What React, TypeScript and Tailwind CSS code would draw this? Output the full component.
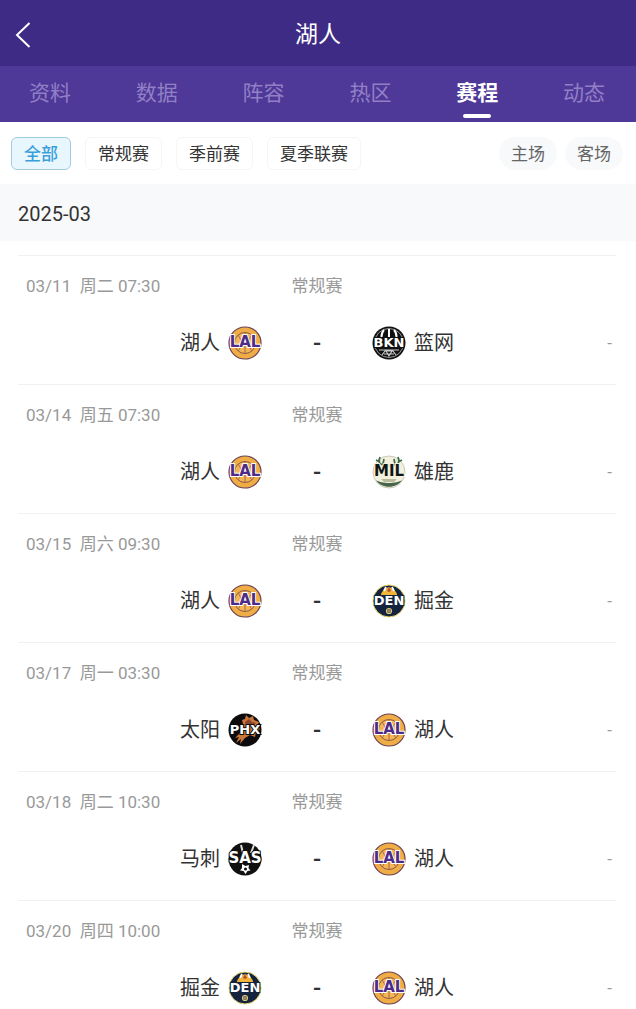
import React, { useState } from 'react';

type TeamCode = 'LAL' | 'BKN' | 'MIL' | 'DEN' | 'PHX' | 'SAS';

const tabs = ['资料', '数据', '阵容', '热区', '赛程', '动态'];
const stages = ['全部', '常规赛', '季前赛', '夏季联赛'];
const venues = ['主场', '客场'];

const teamNames: Record<TeamCode, string> = {
  LAL: '湖人',
  BKN: '篮网',
  MIL: '雄鹿',
  DEN: '掘金',
  PHX: '太阳',
  SAS: '马刺',
};

const games: { date: string; day: string; time: string; home: TeamCode; away: TeamCode }[] = [
  { date: '03/11', day: '周二', time: '07:30', home: 'LAL', away: 'BKN' },
  { date: '03/14', day: '周五', time: '07:30', home: 'LAL', away: 'MIL' },
  { date: '03/15', day: '周六', time: '09:30', home: 'LAL', away: 'DEN' },
  { date: '03/17', day: '周一', time: '03:30', home: 'PHX', away: 'LAL' },
  { date: '03/18', day: '周二', time: '10:30', home: 'SAS', away: 'LAL' },
  { date: '03/20', day: '周四', time: '10:00', home: 'DEN', away: 'LAL' },
];

// The drawing behind the letters of each badge
const badgeArt: Record<TeamCode, React.ReactNode> = {
  LAL: (
    <>
      <circle cx="17" cy="17" r="16" fill="#f0ad45" stroke="#6b4050" strokeWidth="1.2" />
      <circle cx="17" cy="17" r="10.5" fill="#f5b555" stroke="#8a5a49" strokeWidth="1" />
      <path d="M17 6.5v21M10 9c4 4 4 12 0 16M24 9c-4 4-4 12 0 16" fill="none" stroke="#a06a4d" strokeWidth="1" />
    </>
  ),
  BKN: (
    <>
      <circle cx="17" cy="17" r="16.5" fill="#111" />
      <circle cx="17" cy="17" r="14.5" fill="none" stroke="#bbb" strokeWidth="0.8" />
      <path d="M17 3v8M12 4c-2 2-2.500 4-2.500 7M22 4c2 2 2.500 4 2.500 7" fill="none" stroke="#fff" strokeWidth="2" />
      <path d="M7 24h20M10 29l3-4h8l3 4M12 28h10M14 25l3 5 3-5" fill="none" stroke="#ccc" strokeWidth="1.1" />
    </>
  ),
  MIL: (
    <>
      <circle cx="17" cy="17" r="16" fill="#f3f0dd" stroke="#c7cbb6" strokeWidth="1" />
      <path d="M14 10C7 10 6 7 8 2M8 7L4 5M11 9l1-5M20 10c7 0 8-3 6-8M26 7l4-2M23 9l-1-5" fill="none" stroke="#3f6b4b" strokeWidth="1.7" />
      <path d="M14 8l3 2 3-2v4h-6z" fill="#d8cfa9" />
      <path d="M4 25c5 4 21 4 26 0-5 9-21 9-26 0z" fill="#47654b" />
      <path d="M9 24h16l-3 3H12z" fill="#b6bc9d" />
    </>
  ),
  DEN: (
    <>
      <circle cx="17" cy="17" r="16" fill="#14243f" stroke="#e8d36a" strokeWidth="1" />
      <path d="M9 11c0-3 3-6 8-8 5 2 8 5 8 8z" fill="#f1b53a" />
      <path d="M12 7l2-4M22 7l-2-4" fill="none" stroke="#fff" strokeWidth="1.8" />
      <path d="M17 3l2 4-2 1-2-1z" fill="#b54b35" />
      <circle cx="17" cy="27" r="2.500" fill="none" stroke="#dfc67c" strokeWidth="1.2" />
      <path d="M17 24v6M14 27h6" stroke="#dfc67c" strokeWidth="0.8" />
    </>
  ),
  PHX: (
    <>
      <circle cx="17" cy="17" r="16.500" fill="#0d0b0e" />
      <path d="M14 7l3-1 1-4 3 3 4-2 1 4 5 2-2 4 3 3-4 3-1 5-5-2-5 3-5 6 1-5-5 4 3-6-4 1 5-5 4-5z" fill="#c9763b" />
      <path d="M17 9l4-3 3 3 4 1-3 3-7 1z" fill="#8c452d" />
    </>
  ),
  SAS: (
    <>
      <circle cx="17" cy="17" r="16.500" fill="#101010" />
      <path d="M13 3l2 8M26 3l-3 8" fill="none" stroke="#ddd" strokeWidth="2" />
      <path d="M14 22l3.500 2 3.500-1-.500 3 2 2.500-3 .500-2 3-2-3-3.500-.500 2-2.500z" fill="#fff" />
      <circle cx="17.500" cy="27" r="1.500" fill="#101010" />
    </>
  ),
};

const badgeText: Record<TeamCode, { fill: string; outline: string; size: string }> = {
  LAL: { fill: '#4d2b86', outline: '#fff', size: 'text-[15px]' },
  BKN: { fill: '#fff', outline: '#111', size: 'text-[13px]' },
  MIL: { fill: '#101612', outline: '#f3f0dd', size: 'text-[15px]' },
  DEN: { fill: '#fff', outline: '#14243f', size: 'text-[13px]' },
  PHX: { fill: '#fff', outline: '#0d0b0e', size: 'text-[13px]' },
  SAS: { fill: '#fff', outline: '#101010', size: 'text-[15px]' },
};

function TeamBadge({ code }: { code: TeamCode }) {
  const { fill, outline, size } = badgeText[code];

  return (
    <svg viewBox="0 0 34 34" className="size-[34px] shrink-0 overflow-visible" aria-hidden="true">
      {badgeArt[code]}
      <text
        x="17"
        y="21"
        textAnchor="middle"
        fill={fill}
        stroke={outline}
        strokeWidth="2"
        paintOrder="stroke"
        className={`font-['DejaVu_Sans',sans-serif] font-bold ${size}`}
      >
        {code}
      </text>
    </svg>
  );
}

export default function App() {
  const [activeTab, setActiveTab] = useState('赛程');
  const [activeStage, setActiveStage] = useState('全部');
  const [activeVenue, setActiveVenue] = useState<string | null>(null);

  return (
    <div className="bg-white font-[Roboto,'Noto_Sans_CJK_SC',sans-serif] text-[#333]">
      <header className="grid h-[66px] grid-cols-[40px_1fr_40px] items-center bg-[#3d2b85] pt-[3px] text-white">
        <button type="button" aria-label="返回" className="pl-[15px]">
          <svg viewBox="0 0 16 26" className="h-[26px] w-4" fill="none" stroke="currentColor" strokeWidth="2">
            <path d="M14.500 1L2 13l12.500 12" />
          </svg>
        </button>
        <h1 className="text-center text-[23px] leading-8">湖人</h1>
      </header>

      <nav className="flex h-14 justify-between bg-[#4e3898] pr-[31px] pl-[29px]">
        {tabs.map((tab) => (
          <button
            key={tab}
            type="button"
            onClick={() => setActiveTab(tab)}
            className={`flex flex-col items-center justify-between pt-[11px] pb-1 text-[21px] leading-8 ${
              activeTab === tab ? 'font-bold text-white' : 'text-[#9180c6]'
            }`}
          >
            {tab}
            {activeTab === tab && <span className="h-1 w-7 rounded-full bg-white" />}
          </button>
        ))}
      </nav>

      <div className="flex h-[62px] items-center justify-between pr-[13px] pl-[11px] text-[17px] leading-6">
        <div className="flex gap-[14px]">
          {stages.map((stage) => (
            <button
              key={stage}
              type="button"
              onClick={() => setActiveStage(stage)}
              className={`h-[33px] rounded-md border px-3 pt-px ${
                activeStage === stage
                  ? 'border-[#a3cce0] bg-[#e8f6fe] font-medium text-[#3a9fd8]'
                  : 'border-[#f5f5f5] bg-white'
              }`}
            >
              {stage}
            </button>
          ))}
        </div>
        <div className="flex gap-2">
          {venues.map((venue) => (
            <button
              key={venue}
              type="button"
              onClick={() => setActiveVenue(activeVenue === venue ? null : venue)}
              className={`h-[33px] rounded-full px-3 pt-px ${
                activeVenue === venue ? 'bg-[#e8f6fe] text-[#3a9fd8]' : 'bg-[#f8f9fb] text-[#666]'
              }`}
            >
              {venue}
            </button>
          ))}
        </div>
      </div>

      <h2 className="bg-[#f8f9fb] px-[18px] pt-4 pb-[13px] text-[20px] leading-7">2025-03</h2>

      <ul className="mt-[14px] mr-5 ml-[18px]">
        {games.map((game) => (
          <li key={game.date} className="h-[129px] border-t border-[#f1f1f1] pt-[18px]">
            <div className="grid grid-cols-[1fr_auto_1fr] text-[17px] leading-6 text-[#999]">
              <time className="pl-2 whitespace-pre">{`${game.date}  ${game.day} ${game.time}`}</time>
              <span>常规赛</span>
            </div>
            <div className="mt-7 grid grid-cols-[1fr_110px_1fr] items-center text-[20px] leading-[34px]">
              <div className="flex items-center justify-end gap-2">
                {teamNames[game.home]}
                <TeamBadge code={game.home} />
              </div>
              <span className="text-center text-[24px] font-medium">-</span>
              <div className="flex items-center gap-2">
                <TeamBadge code={game.away} />
                {teamNames[game.away]}
                <span className="ml-auto pr-1 text-[17px] text-[#999]">-</span>
              </div>
            </div>
          </li>
        ))}
      </ul>
    </div>
  );
}
